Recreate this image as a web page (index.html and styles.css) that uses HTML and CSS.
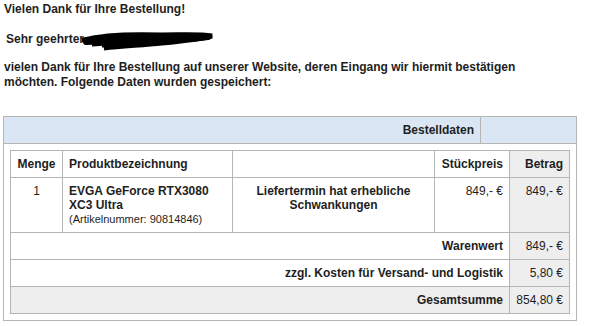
FILE: index.html
```html
<!DOCTYPE html>
<html lang="de">
<head>
<meta charset="utf-8">
<link rel="stylesheet" href="styles.css">
</head>
<body>
<div class="greeting">Vielen Dank für Ihre Bestellung!</div>
<div class="salutation"><span>Sehr geehrter</span><svg class="redact" width="132" height="20" viewBox="0 0 132 20"><path d="M2 9 C20 4 50 3 80 4 C100 4 118 3 130 5 C118 8 100 10 80 12 C60 14 40 15 22 17 C40 12 60 9 90 7 C70 9 40 11 10 13 C30 8 60 7 100 6" fill="none" stroke="#000" stroke-width="5" stroke-linecap="round"/><path d="M4 11 L30 10 L70 9 L110 8 L126 6" stroke="#000" stroke-width="6" fill="none" stroke-linecap="round"/><path d="M20 15 C50 14 80 12 110 9" stroke="#000" stroke-width="3" fill="none"/></svg></div>
<p class="intro">vielen Dank für Ihre Bestellung auf unserer Website, deren Eingang wir hiermit bestätigen möchten. Folgende Daten wurden gespeichert:</p>
<table class="outer">
  <colgroup><col class="c-main"><col class="c-side"></colgroup>
  <tr class="outer-head"><th>Bestelldaten</th><th></th></tr>
  <tr>
    <td colspan="2" class="outer-body">
      <table class="order">
        <colgroup><col class="c1"><col class="c2"><col class="c3"><col class="c4"><col class="c5"></colgroup>
        <tr class="head">
          <th class="center">Menge</th>
          <th class="left">Produktbezeichnung</th>
          <th></th>
          <th class="right">Stückpreis</th>
          <th class="right grey">Betrag</th>
        </tr>
        <tr class="item">
          <td class="center price">1</td>
          <td class="left">EVGA GeForce RTX3080<br>XC3 Ultra<br><small>(Artikelnummer: 90814846)</small></td>
          <td class="center">Liefertermin hat erhebliche<br>Schwankungen</td>
          <td class="right price">849,- €</td>
          <td class="right grey price">849,- €</td>
        </tr>
        <tr>
          <td colspan="4" class="right">Warenwert</td>
          <td class="right grey price">849,- €</td>
        </tr>
        <tr>
          <td colspan="4" class="right">zzgl. Kosten für Versand- und Logistik</td>
          <td class="right grey price">5,80 €</td>
        </tr>
        <tr class="total">
          <td colspan="4" class="right">Gesamtsumme</td>
          <td class="right price">854,80 €</td>
        </tr>
      </table>
    </td>
  </tr>
</table>
</body>
</html>
```

FILE: styles.css
```css
html, body {
  background: #ffffff;
}
body {
  margin: 0;
  padding: 2px 3px 0 3px;
  font-family: "Liberation Sans", Arial, sans-serif;
  font-size: 12px;
  font-weight: bold;
  line-height: 15px;
  color: #1e1e1e;
}
.greeting {
  margin: 0 0 15px 1px;
}
.salutation {
  display: flex;
  align-items: center;
  height: 15px;
  margin: 0 0 13px 3px;
}
.redact {
  display: block;
  margin-left: -2px;
  margin-top: 3px;
}
.intro {
  margin: 0 0 26px 1px;
  width: 540px;
}
table {
  border-collapse: collapse;
  table-layout: fixed;
}
.outer {
  width: 574px;
  font-size: 12px;
  line-height: 14px;
}
.c-side { width: 96px; }
.outer th, .outer td {
  border: 1px solid #b5b5b5;
}
.outer-head th {
  background: #dae6f4;
  font-weight: bold;
  text-align: right;
  padding: 6px 6px;
  height: 14px;
}
.outer-body {
  padding: 6px 6px 6px 6px;
}
.order {
  width: 560px;
}
.c1 { width: 52px; }
.c2 { width: 170px; }
.c3 { width: 202px; }
.c4 { width: 75px; }
.c5 { width: 60px; }
.order th, .order td {
  border: 1px solid #b5b5b5;
  padding: 6px 6px;
  font-weight: bold;
  vertical-align: top;
  background: #ffffff;
}
.order .price {
  font-weight: normal;
}
.order .grey {
  background: #eeeeee;
}
.order .total td {
  background: #eeeeee;
}
.center { text-align: center; }
.left { text-align: left; }
.right { text-align: right; }
small {
  font-size: 11px;
  font-weight: normal;
}
```
